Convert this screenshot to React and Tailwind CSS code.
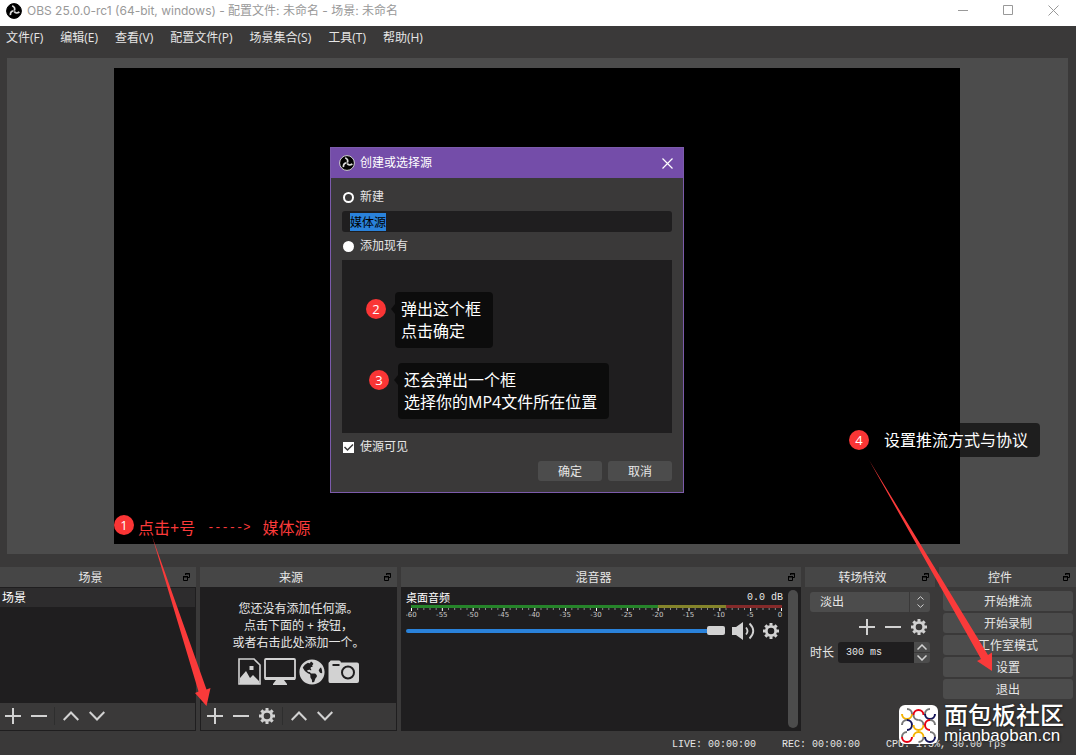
import { useEffect, useRef, useState } from 'react';
import { FaGlobeAmericas } from 'react-icons/fa';

const menus = ['文件(F)', '编辑(E)', '查看(V)', '配置文件(P)', '场景集合(S)', '工具(T)', '帮助(H)'];
const controls = ['开始推流', '开始录制', '工作室模式', '设置', '退出'];

export default function App() {
  return (
    <div className="relative flex flex-col min-h-screen overflow-hidden bg-[#3a3939] text-xs text-[#e6e6e6] font-['Open_Sans','Noto_Sans_CJK_SC',sans-serif]">
      <TitleBar />

      {/* 菜单栏 */}
      <nav className="flex items-center h-6 px-1.5 gap-[17px]">
        {menus.map((m) => (
          <button key={m} className="leading-4 whitespace-nowrap">{m}</button>
        ))}
      </nav>

      {/* 预览区 */}
      <main className="flex flex-1 min-h-[496px] mt-2 mx-[7px] mr-2 pl-[107px] pr-[108px] py-2.5 bg-[#4c4c4c]">
        <div className="flex-1 bg-black" />
      </main>

      {/* 停靠面板 */}
      <div className="grid grid-cols-[196fr_197fr_400fr_130fr_137fr] gap-1 mt-[13px]">
        <ScenesDock />
        <SourcesDock />
        <MixerDock />
        <TransitionsDock />
        <Dock title="控件">
          <div className="flex flex-col gap-0.5 pt-1 pl-1 pr-[3px]">
            {controls.map((c) => (
              <button key={c} className="h-5 leading-[21px] rounded-[3px] bg-[#4c4c4c]">{c}</button>
            ))}
          </div>
        </Dock>
      </div>

      {/* 状态栏 */}
      <footer className="flex items-center justify-end h-6 pt-1 pr-[70px] gap-[26px] text-[10px] whitespace-pre font-['Liberation_Mono',monospace]">
        <span>LIVE: 00:00:00</span>
        <span>REC: 00:00:00</span>
        <span>CPU: 1.5%, 30.00 fps</span>
      </footer>

      <SourceDialog />
      <Annotations />
      <Watermark />
    </div>
  );
}

function ObsLogo({ ring }) {
  return (
    <svg viewBox="0 0 16 16" className="size-4 fill-none">
      <circle cx="8" cy="8" r="7.4" fill="#000000" stroke={ring} />
      {[0, 120, 240].map((a) => (
        <path key={a} d="M8.300 7.600Q9.800 4.600 6.200 2.800" stroke="#dcdcdc" strokeWidth="1.700" transform={`rotate(${a} 8 8)`} />
      ))}
    </svg>
  );
}

function TitleBar() {
  return (
    <header className="flex items-center h-[26px] pl-1.5 pb-1 bg-white text-[#999999]">
      <ObsLogo ring="#000000" />
      <h1 className="flex-1 ml-[5px] leading-5 font-['Inter','Noto_Sans_CJK_SC',sans-serif]">OBS 25.0.0-rc1 (64-bit, windows) - 配置文件: 未命名 - 场景: 未命名</h1>
      {[
        { label: '最小化', d: 'M0 5.5H10' },
        { label: '最大化', d: 'M.5 .5H9.5V9.5H.5Z' },
        { label: '关闭', d: 'M.5 .5L10.5 10.5M10.5 .5L.5 10.5' },
      ].map(({ label, d }) => (
        <button key={label} aria-label={label} className="flex items-center justify-center self-start w-[45px] h-5">
          <svg viewBox="0 0 11 11" className="size-[11px] fill-none stroke-current"><path d={d} /></svg>
        </button>
      ))}
    </header>
  );
}

function Dock({ title, children }) {
  return (
    <section className="flex flex-col min-w-0">
      <div className="flex items-center h-5 pr-1.5 bg-[#464646]">
        <h2 className="flex-1 pr-0.5 text-center leading-[21px]">{title}</h2>
        <button aria-label={`弹出${title}`}>
          <svg viewBox="0 0 7 8" className="w-[7px] h-2 fill-none stroke-black">
            <path d="M2 1H7M2.5 2V.5H6.5V4.5H5M0 4H5M.5 3V7.5H4.5V3M0 3.5H5" />
          </svg>
        </button>
      </div>
      <div className="flex flex-col flex-1 min-h-36">{children}</div>
    </section>
  );
}

function ToolButton({ icon, label }) {
  return (
    <button aria-label={label} className="flex items-center justify-center w-[26px] h-[26px] text-[#d2d2d2]">
      {icon === 'gear' ? <Gear /> : (
        <svg viewBox="0 0 16 16" className="size-4 fill-none stroke-current stroke-2">
          {icon === 'plus' && <path d="M8 0V16M0 8H16" />}
          {icon === 'minus' && <path d="M0 8H16" />}
          {icon === 'up' && <path d="M.7 12L8 4.5L15.3 12" />}
          {icon === 'down' && <path d="M.7 4L8 11.5L15.3 4" />}
        </svg>
      )}
    </button>
  );
}

function Gear() {
  return (
    <svg viewBox="0 0 16 16" className="size-4 fill-none stroke-current">
      <circle cx="8" cy="8" r="4.7" strokeWidth="2.8" />
      {[0, 45, 90, 135].map((a) => (
        <path key={a} d="M8 0V2.6M8 13.4V16" strokeWidth="3" transform={`rotate(${a} 8 8)`} />
      ))}
    </svg>
  );
}

function Separator() {
  return <span className="w-px h-[18px] mt-1 ml-0.5 mr-[3px] bg-[#2e2e2e]" />;
}

function ScenesDock() {
  return (
    <Dock title="场景">
      <ul className="flex-1 border-t border-r border-[#1f1e1f] bg-[#1f1e1f]">
        <li className="pl-0.5 leading-[19px] text-white bg-[#2d2c2d]">场景</li>
      </ul>
      <div className="flex items-start h-7 border-b border-r border-[#1f1e1f]">
        <ToolButton icon="plus" label="添加场景" />
        <ToolButton icon="minus" label="删除场景" />
        <Separator />
        <ToolButton icon="up" label="上移" />
        <ToolButton icon="down" label="下移" />
      </div>
    </Dock>
  );
}

function SourcesDock() {
  return (
    <Dock title="来源">
      <div className="flex flex-col items-center flex-1 pt-[13px] bg-[#1f1e1f] text-center leading-[17px]">
        <p>您还没有添加任何源。</p>
        <p>点击下面的 + 按钮，</p>
        <p>或者右击此处添加一个。</p>
        <div className="flex items-center gap-[3px] mt-[7px] text-[#d2d2d2]">
          <svg viewBox="0 0 23 27" className="w-[23px] h-[27px]">
            <path fill="none" stroke="currentColor" strokeWidth="1.6" d="M1 1H16L22 7V26H1Z" />
            <path fill="currentColor" d="M2 24V20L8 13L12 20L15 17L21 23V26H2ZM11.5 8H15.5V12H11.5Z" />
          </svg>
          <svg viewBox="0 0 32 27" className="w-8 h-[27px]">
            <rect x="1" y="1" width="30" height="20" rx="1" fill="none" stroke="currentColor" strokeWidth="1.8" />
            <path fill="currentColor" d="M1 19H31V22H20L23 26V27H9V26L12 22H1Z" />
          </svg>
          <FaGlobeAmericas className="size-[26px]" />
          <svg viewBox="0 0 31 24" className="w-[31px] h-6">
            <path fill="currentColor" fillRule="evenodd" d="M2 1.5Q2 .5 3 .5H11Q12.500 .5 13 2.500H29Q31 2.500 31 4.500V21Q31 23 29 23H2Q.5 23 .5 21V3.500Q.5 2 2 1.500ZM4.500 4V6H11.500V4ZM20 5.500A7 7 0 1 0 20 19.500A7 7 0 1 0 20 5.500ZM20 7.500A5 5 0 1 1 20 17.500A5 5 0 1 1 20 7.500Z" />
          </svg>
        </div>
      </div>
      <div className="flex items-start h-7 pl-px border-x border-b border-[#1f1e1f]">
        <ToolButton icon="plus" label="添加来源" />
        <ToolButton icon="minus" label="删除来源" />
        <ToolButton icon="gear" label="来源属性" />
        <Separator />
        <ToolButton icon="up" label="上移" />
        <ToolButton icon="down" label="下移" />
      </div>
    </Dock>
  );
}

// 音量表刻度: -60dB 到 0dB
function Meter() {
  const step = 370 / 60;
  return (
    <svg viewBox="0 0 377 16" className="w-full" aria-hidden="true">
      <path d="M5 1.500H252" stroke="#26842a" strokeWidth="3" />
      <path d="M252 1.500H320" stroke="#84842a" strokeWidth="3" />
      <path d="M320 1.500H376" stroke="#842a2a" strokeWidth="3" />
      {Array.from({ length: 61 }, (_, i) => (
        <line key={i} x1={5.5 + i * step} x2={5.5 + i * step} y1="3" y2={i % 5 ? 5 : 6}
          stroke={i % 5 ? '#8a8a8a' : '#ffffff'} />
      ))}
      {Array.from({ length: 13 }, (_, i) => (
        <text key={i} x={i === 12 ? 374 : 5 + i * step * 5} y="12" textAnchor="middle"
          fill="#c8c8c8" fontSize="7" fontFamily="DejaVu Sans, sans-serif">{i * 5 - 60}</text>
      ))}
    </svg>
  );
}

function MixerDock() {
  const [volume, setVolume] = useState(100);
  return (
    <Dock title="混音器">
      <div className="flex flex-1 pl-[5px] pr-[3px] py-[3px] gap-[5px] bg-[#1f1e1f]">
        <div className="flex-1 min-w-0">
          <div className="flex justify-between h-[15px] leading-[15px]">
            <label htmlFor="volume" className="text-[11px] text-white">桌面音频</label>
            <span className="text-[10px] whitespace-pre font-['Liberation_Mono',monospace]">0.0 dB</span>
          </div>
          <Meter />
          <div className="flex items-center h-5">
            <input id="volume" type="range" value={volume} onChange={(e) => setVolume(Number(e.target.value))}
              className="flex-1 min-w-0 h-[9px] appearance-none bg-transparent [&::-webkit-slider-runnable-track]:h-1 [&::-webkit-slider-runnable-track]:rounded-sm [&::-webkit-slider-runnable-track]:bg-[#2a82da] [&::-webkit-slider-thumb]:appearance-none [&::-webkit-slider-thumb]:w-[18px] [&::-webkit-slider-thumb]:h-[9px] [&::-webkit-slider-thumb]:-mt-[3px] [&::-webkit-slider-thumb]:rounded-[2px] [&::-webkit-slider-thumb]:bg-[#d2d2d2]" />
            <button aria-label="静音" className="ml-[7px] text-[#d2d2d2]">
              <svg viewBox="0 0 23 18" className="w-[23px] h-[18px]">
                <path fill="currentColor" d="M0 5H4L11 0V18L4 13H0Z" />
                <path fill="none" stroke="currentColor" strokeWidth="1.8" d="M14 5.500Q17 9 14 12.500M17.500 1.500Q25 9 17.500 16.500" />
              </svg>
            </button>
            <button aria-label="音频设置" className="ml-2 mr-1 text-[#d2d2d2]"><Gear /></button>
          </div>
        </div>
        <div className="w-2.5 rounded-full bg-[#4c4c4c]" />
      </div>
    </Dock>
  );
}

function TransitionsDock() {
  return (
    <Dock title="转场特效">
      <div className="px-[5px] pt-[5px]">
        <div className="grid">
          <select aria-label="转场特效" className="col-start-1 row-start-1 h-5 pl-2.5 appearance-none rounded-[3px] bg-[#4c4c4c]">
            <option>淡出</option>
          </select>
          <span className="flex items-center justify-center col-start-1 row-start-1 justify-self-end w-[21px] border-l border-[#3a3939] pointer-events-none">
            <svg viewBox="0 0 7 12" className="w-[7px] h-3 fill-none stroke-[#d2d2d2]"><path d="M.5 3.500L3.500 .7L6.500 3.500M.5 8.500L3.500 11.300L6.500 8.500" /></svg>
          </span>
        </div>
        <div className="flex justify-end mt-0.5 -mr-0.5">
          <ToolButton icon="plus" label="添加转场" />
          <ToolButton icon="minus" label="删除转场" />
          <ToolButton icon="gear" label="转场属性" />
        </div>
        <div className="flex items-center mt-0.5">
          <label htmlFor="duration" className="w-7">时长</label>
          <input id="duration" defaultValue="300 ms" className="flex-1 min-w-0 h-[21px] pl-2 rounded-l-[3px] bg-[#1f1e1f] text-[10px] font-['Liberation_Mono',monospace]" />
          <div className="flex flex-col gap-px w-4 h-[21px]">
            <button aria-label="增加" className="flex flex-1 items-center justify-center bg-[#4c4c4c] rounded-tr-[3px]">
              <svg viewBox="0 0 10 6" className="w-2.5 h-1.5 fill-none stroke-[#d2d2d2]"><path strokeWidth="1.500" d="M.5 5.500L5 1L9.500 5.500" /></svg>
            </button>
            <button aria-label="减少" className="flex flex-1 items-center justify-center bg-[#4c4c4c] rounded-br-[3px]">
              <svg viewBox="0 0 10 6" className="w-2.5 h-1.5 fill-none stroke-[#d2d2d2]"><path strokeWidth="1.500" d="M.5 .5L5 5L9.500 .5" /></svg>
            </button>
          </div>
        </div>
      </div>
    </Dock>
  );
}

function SourceDialog() {
  const [mode, setMode] = useState('new');
  const [visible, setVisible] = useState(true);
  const nameRef = useRef(null);

  useEffect(() => {
    nameRef.current?.focus();
    nameRef.current?.select();
  }, []);

  const radio = (value, label) => (
    <label className="flex items-center h-[22px] pl-px gap-1.5">
      <input type="radio" name="mode" checked={mode === value} onChange={() => setMode(value)}
        className="size-[11px] appearance-none rounded-full bg-white checked:border-2 checked:border-white checked:bg-[#3a3939]" />
      {label}
    </label>
  );

  return (
    <div role="dialog" aria-label="创建或选择源" className="absolute left-[330px] top-[147px] w-[354px] border border-[#7c5bab] bg-[#3a3939]">
      <div className="flex items-center h-[30px] pl-2 pr-2.5 bg-[#744da9] text-white">
        <ObsLogo ring="#d0d0d0" />
        <h2 className="flex-1 ml-[5px]">创建或选择源</h2>
        <button aria-label="关闭">
          <svg viewBox="0 0 11 11" className="size-[11px] fill-none stroke-white"><path strokeWidth="1.200" d="M.5 .5L10.500 10.500M10.500 .5L.5 10.500" /></svg>
        </button>
      </div>
      <div className="flex flex-col gap-[3px] px-[11px] pt-2 pb-[11px]">
        {radio('new', '新建')}
        <input ref={nameRef} aria-label="源名称" defaultValue="媒体源"
          className="h-[21px] px-2 rounded-[3px] bg-[#1f1e1f] leading-[13px] outline-none selection:bg-[#2a82da] selection:text-black" />
        {radio('existing', '添加现有')}
        <ul className="h-[173px] bg-[#1f1e1f]" />
        <label className="flex items-center h-[22px] pl-px gap-1.5">
          <span className="grid">
            <input type="checkbox" checked={visible} onChange={(e) => setVisible(e.target.checked)}
              className="col-start-1 row-start-1 size-[11px] appearance-none bg-white" />
            {visible && (
              <svg viewBox="0 0 11 11" className="col-start-1 row-start-1 size-[11px] fill-none stroke-[#3a3939] pointer-events-none"><path strokeWidth="1.500" d="M1.500 5L4.500 8L10 2.500" /></svg>
            )}
          </span>
          使源可见
        </label>
        <div className="flex justify-end gap-1.5">
          <button className="w-16 h-5 leading-[21px] rounded-[3px] bg-[#4c4c4c]">确定</button>
          <button className="w-16 h-5 leading-[21px] rounded-[3px] bg-[#4c4c4c]">取消</button>
        </div>
      </div>
    </div>
  );
}

function Badge({ children }) {
  return (
    <span className="flex items-center justify-center size-5 shrink-0 rounded-full bg-[#fa3535] text-white text-[13px] leading-5">{children}</span>
  );
}

function Callout({ number, children }) {
  return (
    <div className="flex items-start">
      <div className="pt-[7px]"><Badge>{number}</Badge></div>
      <svg viewBox="0 0 4 10" className="w-1 h-2.5 mt-3 ml-[5px] fill-black/60"><path d="M4 0V10L0 5Z" /></svg>
      <p className="pl-1.5 pr-3 py-1.5 rounded bg-black/60 text-base leading-[22px] text-white whitespace-nowrap">{children}</p>
    </div>
  );
}

// 教程标注
function Annotations() {
  return (
    <>
      <div className="absolute left-[366px] top-[292px]">
        <Callout number={2}>弹出这个框<br />点击确定</Callout>
      </div>
      <div className="absolute left-[369px] top-[363px]">
        <Callout number={3}>还会弹出一个框<br />选择你的MP4文件所在位置</Callout>
      </div>
      <div className="absolute right-9 top-[423px] flex items-center">
        <Badge>4</Badge>
        <p className="ml-[9px] pl-1.5 pr-3 py-1.5 rounded bg-black/60 text-base leading-[22px] text-white">设置推流方式与协议</p>
      </div>
      <div className="absolute left-[114px] top-[515px] flex items-start gap-1">
        <Badge>1</Badge>
        <p className="flex items-center gap-3 pt-0.5 text-base leading-[22px] text-[#fa3a3a]">
          <span>点击+号</span>
          <span className="text-xs font-['Liberation_Mono',monospace]">-----&gt;</span>
          <span>媒体源</span>
        </p>
      </div>
      <svg viewBox="0 0 60 172" className="absolute left-[152px] top-[535px] w-[60px] h-[172px] fill-[#fa3a3a] pointer-events-none">
        <path d="M0 1L46.500 156.500L43 158L54.500 171L58.500 153L54.500 154.500Z" />
      </svg>
      <svg viewBox="0 0 126 214" className="absolute right-[81px] top-[459px] w-[126px] h-[214px] fill-[#fa3a3a] pointer-events-none">
        <path d="M0 1L112 200L108 202L123 212L123 193.500L119 196Z" />
      </svg>
    </>
  );
}

// 每个圆环: 彩色半环 + 灰色四分之一环, 角度以右侧为 0
const rings = [
  { x: 8, y: 9, color: '#f5b301', turn: 0, gray: 270 },
  { x: 19.5, y: 10, color: '#e60012', turn: 180, gray: 90 },
  { x: 31, y: 9, color: '#15155a', turn: 0, gray: 180 },
  { x: 8, y: 20, color: '#15155a', turn: 270, gray: 180 },
  { x: 19.5, y: 20, color: '#f5b301', turn: 0, gray: 270 },
  { x: 31, y: 20, color: '#e60012', turn: 90, gray: 270 },
  { x: 8, y: 32, color: '#e60012', turn: 0, gray: 180 },
  { x: 19.5, y: 32, color: '#f5b301', turn: 180, gray: 0 },
  { x: 31, y: 32, color: '#15155a', turn: 0, gray: 270 },
];

function Watermark() {
  return (
    <div className="absolute right-3 bottom-2.5 flex items-center gap-1.5 text-white">
      <svg viewBox="0 0 39 39" className="size-[39px] rounded-md bg-white fill-none">
        {rings.map(({ x, y, color, turn, gray }) => (
          <g key={`${x}-${y}`} transform={`translate(${x} ${y})`} strokeWidth="2">
            <path stroke="#777777" d="M5 0A5 5 0 0 1 0 5" transform={`rotate(${gray})`} />
            <path stroke={color} d="M5 0A5 5 0 0 1 -5 0" transform={`rotate(${turn})`} />
          </g>
        ))}
      </svg>
      <div className="font-medium [text-shadow:0_0_2px_#222,1px_1px_2px_#222]">
        <p className="text-2xl leading-6">面包板社区</p>
        <p className="text-[17px] leading-[18px] font-['Liberation_Sans',sans-serif]">mianbaoban.cn</p>
      </div>
    </div>
  );
}
